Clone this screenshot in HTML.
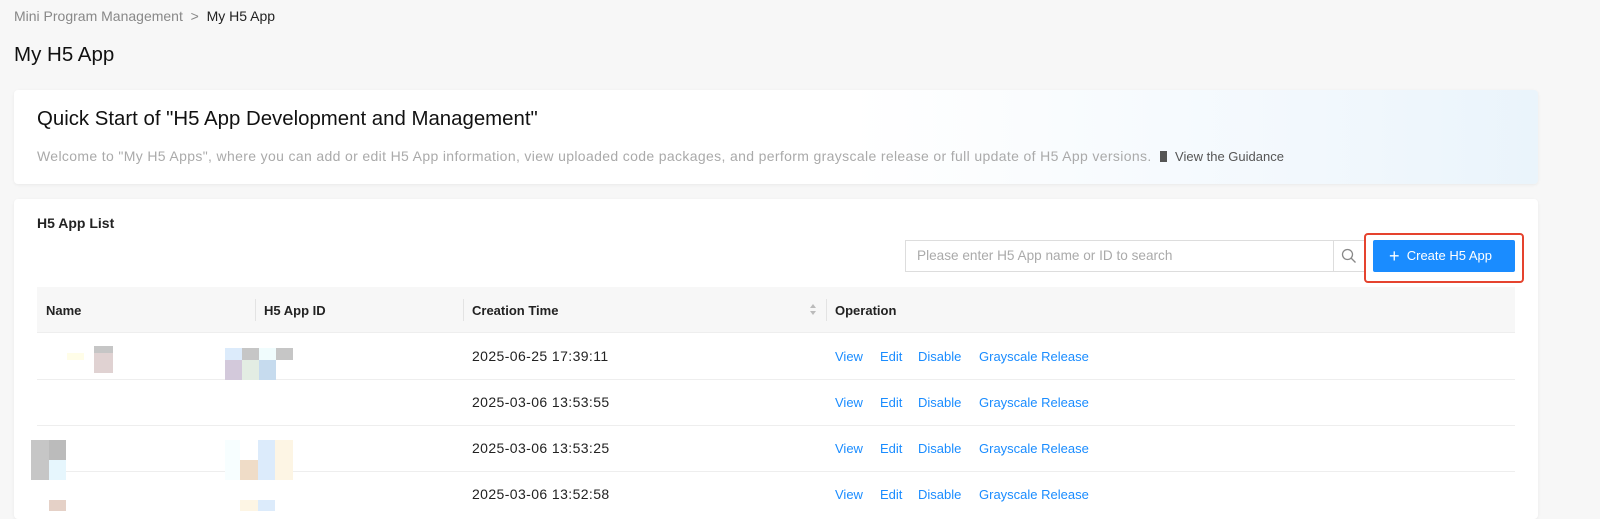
<!DOCTYPE html>
<html><head><meta charset="utf-8"><style>
*{box-sizing:border-box;margin:0;padding:0}
body{width:1600px;height:511px;overflow:hidden;background:#f7f7f7;font-family:"Liberation Sans",sans-serif;position:relative;color:#222}
.a{position:absolute;white-space:nowrap}
.card{background:#fff;border-radius:4px;box-shadow:0 1px 3px rgba(0,0,0,.06)}
.th{font-size:13px;font-weight:bold;color:#222}
.td{font-size:14px;color:#222;letter-spacing:.4px}
.op{font-size:13px;color:#1a8cff}
.blk{position:absolute}
</style></head><body>
<div class="a" style="left:14px;top:8px;font-size:14px;color:#888">Mini Program Management &nbsp;&gt;&nbsp; <span style="color:#222">My H5 App</span></div>
<div class="a" style="left:14px;top:43px;font-size:20.5px;color:#111">My H5 App</div>

<div class="a card" style="left:14px;top:90px;width:1524px;height:94px;background:linear-gradient(90deg,#fff 55%,#f2f8fd 85%,#eaf4fb)">
<div class="a" style="left:23px;top:18px;font-size:20.4px;color:#111">Quick Start of "H5 App Development and Management"</div>
<div class="a" style="left:23px;top:58px;font-size:14px;letter-spacing:.35px;color:#aaa">Welcome to "My H5 Apps", where you can add or edit H5 App information, view uploaded code packages, and perform grayscale release or full update of H5 App versions. <span style="display:inline-block;width:7px;height:11px;background:#555;vertical-align:-1px;margin:0 4px"></span> <span style="color:#555;font-size:13px;letter-spacing:0">View the Guidance</span></div>
</div>

<div class="a card" style="left:14px;top:199px;width:1524px;height:320px"></div>
<div class="a" style="left:37px;top:215px;font-size:14px;font-weight:bold;color:#222">H5 App List</div>

<div class="a" style="left:905px;top:240px;width:461px;height:32px;border:1px solid #ddd;background:#fff"></div>
<div class="a" style="left:1333px;top:240px;width:1px;height:32px;background:#ddd"></div>
<div class="a" style="left:917px;top:248px;font-size:13.6px;color:#aaa">Please enter H5 App name or ID to search</div>
<svg class="a" style="left:1341px;top:248px" width="16" height="16" viewBox="0 0 16 16"><circle cx="6.5" cy="6.5" r="5" fill="none" stroke="#888" stroke-width="1.3"/><path d="M10 10l4.5 4.5" stroke="#888" stroke-width="1.3"/></svg>
<div class="a" style="left:1364px;top:233px;width:160px;height:50px;border:2px solid #e5432e;border-radius:4px"></div>
<div class="a" style="left:1373px;top:240px;width:142px;height:32px;background:#1a8cff;border-radius:2px;color:#fff;font-size:13px;line-height:32px;padding-left:16px"><span style="font-size:18px;vertical-align:-2px">+</span>&nbsp; Create H5 App</div>

<div class="a" style="left:37px;top:287px;width:1478px;height:46px;background:#f7f7f7;border-bottom:1px solid #eee"></div>
<div class="a" style="left:255px;top:299px;width:1px;height:22px;background:#e3e3e3"></div>
<div class="a" style="left:463px;top:299px;width:1px;height:22px;background:#e3e3e3"></div>
<div class="a" style="left:826px;top:299px;width:1px;height:22px;background:#e3e3e3"></div>
<div class="a th" style="left:46px;top:303px">Name</div>
<div class="a th" style="left:264px;top:303px">H5 App ID</div>
<div class="a th" style="left:472px;top:303px">Creation Time</div>
<svg class="a" style="left:809px;top:303px" width="8" height="13"><path d="M4 1L7 5H1Z" fill="#bbb"/><path d="M4 12L7 8H1Z" fill="#bbb"/></svg>
<div class="a th" style="left:835px;top:303px">Operation</div>

<div class="a" style="left:37px;top:379px;width:1478px;height:1px;background:#eee"></div>
<div class="a" style="left:37px;top:425px;width:1478px;height:1px;background:#eee"></div>
<div class="a" style="left:37px;top:471px;width:1478px;height:1px;background:#eee"></div>

<div class="a td" style="left:472px;top:348px">2025-06-25 17:39:11</div>
<div class="a td" style="left:472px;top:394px">2025-03-06 13:53:55</div>
<div class="a td" style="left:472px;top:440px">2025-03-06 13:53:25</div>
<div class="a td" style="left:472px;top:486px">2025-03-06 13:52:58</div>

<div class="a op" style="left:835px;top:349px">View</div><div class="a op" style="left:880px;top:349px">Edit</div><div class="a op" style="left:918px;top:349px">Disable</div><div class="a op" style="left:979px;top:349px">Grayscale Release</div>
<div class="a op" style="left:835px;top:395px">View</div><div class="a op" style="left:880px;top:395px">Edit</div><div class="a op" style="left:918px;top:395px">Disable</div><div class="a op" style="left:979px;top:395px">Grayscale Release</div>
<div class="a op" style="left:835px;top:441px">View</div><div class="a op" style="left:880px;top:441px">Edit</div><div class="a op" style="left:918px;top:441px">Disable</div><div class="a op" style="left:979px;top:441px">Grayscale Release</div>
<div class="a op" style="left:835px;top:487px">View</div><div class="a op" style="left:880px;top:487px">Edit</div><div class="a op" style="left:918px;top:487px">Disable</div><div class="a op" style="left:979px;top:487px">Grayscale Release</div>

<div class="blk" style="left:67px;top:353px;width:17px;height:7px;background:#fffde8"></div>
<div class="blk" style="left:94px;top:346px;width:19px;height:7px;background:#c6c6c6"></div>
<div class="blk" style="left:94px;top:353px;width:19px;height:20px;background:#e0d2d2"></div>
<div class="blk" style="left:225px;top:348px;width:17px;height:12px;background:#dcebfb"></div>
<div class="blk" style="left:242px;top:348px;width:17px;height:12px;background:#c6c6c6"></div>
<div class="blk" style="left:259px;top:348px;width:17px;height:12px;background:#f0fcfd"></div>
<div class="blk" style="left:276px;top:348px;width:17px;height:12px;background:#c6c6c6"></div>
<div class="blk" style="left:225px;top:360px;width:17px;height:20px;background:#d3c9db"></div>
<div class="blk" style="left:242px;top:360px;width:17px;height:20px;background:#e3ede3"></div>
<div class="blk" style="left:259px;top:360px;width:17px;height:20px;background:#c6dbee"></div>
<div class="blk" style="left:31px;top:440px;width:18px;height:40px;background:#c6c6c6"></div>
<div class="blk" style="left:49px;top:440px;width:17px;height:20px;background:#bbb"></div>
<div class="blk" style="left:49px;top:460px;width:17px;height:20px;background:#e6f6fd"></div>
<div class="blk" style="left:225px;top:440px;width:15px;height:40px;background:#f7feff"></div>
<div class="blk" style="left:240px;top:460px;width:18px;height:20px;background:#efdcc7"></div>
<div class="blk" style="left:258px;top:440px;width:17px;height:40px;background:#dcebfb"></div>
<div class="blk" style="left:275px;top:440px;width:18px;height:40px;background:#fdf5e4"></div>
<div class="blk" style="left:49px;top:500px;width:17px;height:11px;background:#e5d1c7"></div>
<div class="blk" style="left:240px;top:500px;width:18px;height:11px;background:#fdf5e4"></div>
<div class="blk" style="left:258px;top:500px;width:17px;height:11px;background:#dcebfb"></div>
</body></html>
